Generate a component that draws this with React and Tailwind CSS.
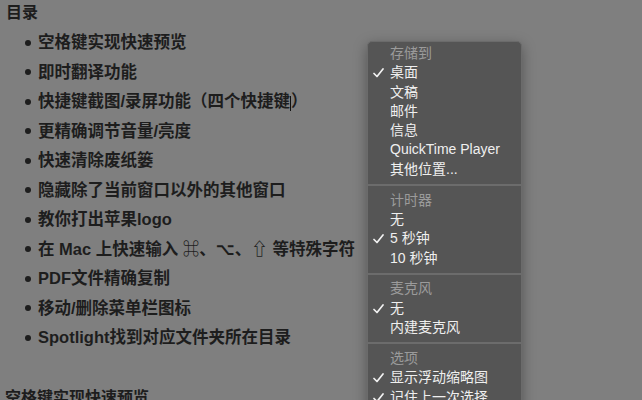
const items = [
  '空格键实现快速预览',
  '即时翻译功能',
  'CURSOR',
  '更精确调节音量/亮度',
  '快速清除废纸篓',
  '隐藏除了当前窗口以外的其他窗口',
  '教你打出苹果logo',
  '在 Mac 上快速输入 ⌘、⌥、⇧ 等特殊字符',
  'PDF文件精确复制',
  '移动/删除菜单栏图标',
  'Spotlight找到对应文件夹所在目录',
]

const menu = [
  { title: '存储到', rows: [['桌面', true], ['文稿'], ['邮件'], ['信息'], ['QuickTime Player'], ['其他位置...']] },
  { title: '计时器', rows: [['无'], ['5 秒钟', true], ['10 秒钟']] },
  { title: '麦克风', rows: [['无', true], ['内建麦克风']] },
  { title: '选项', rows: [['显示浮动缩略图', true], ['记住上一次选择', true]] },
]

function Check() {
  return (
    <svg width="11" height="10" viewBox="0 0 11 10" className="absolute left-[5px] top-[5px]">
      <path d="M1 5.5 L4 8.5 L10 1" fill="none" stroke="#f2f2f2" strokeWidth="1.7" strokeLinecap="round" strokeLinejoin="round" />
    </svg>
  )
}

function CaptureMenu() {
  return (
    <div className="absolute left-[367px] top-[41px] w-[155px] h-[400px] bg-[#555555] rounded-[5px] border border-[#6b6b6b] pt-[2px] shadow-[0_4px_14px_rgba(0,0,0,0.35)] text-[14px] text-[#efefef]">
      {menu.map((sec, i) => (
        <div key={sec.title}>
          {i > 0 && <div className="my-[4.8px] h-[2px] bg-[#6c6c6c]" />}
          <div className="h-[19.3px] leading-[19.3px] pl-[22px] text-[#9b9b9b]">{sec.title}</div>
          {sec.rows.map(([label, checked]) => (
            <div key={label} className="relative h-[19.3px] leading-[19.3px] pl-[22px] whitespace-nowrap">
              {checked && <Check />}
              {label}
            </div>
          ))}
        </div>
      ))}
    </div>
  )
}

export default function App() {
  return (
    <div
      className="relative h-[400px] w-[642px] overflow-hidden bg-[#7f7f7f] text-[#1d1d1d]"
      style={{ fontFamily: '"Liberation Sans", "Noto Sans CJK SC", "DejaVu Sans", sans-serif' }}
    >
      <div className="pl-[6px] h-[28px] leading-[26px] text-[16px] font-bold">目录</div>
      <ul>
        {items.map((t) => (
          <li key={t} className="flex h-[29.5px] items-center pl-[25px] text-[16.5px] font-bold whitespace-nowrap">
            <span className="mr-[7px] h-[6px] w-[6px] shrink-0 rounded-full bg-[#1d1d1d]" />
            {t === 'CURSOR' ? (
              <span>
                快捷键截图/录屏功能（四个快捷键
                <span className="inline-block h-[15px] w-px bg-[#111] align-middle" />
                ）
              </span>
            ) : (
              t
            )}
          </li>
        ))}
      </ul>
      <div className="mt-[32px] pl-[5px] leading-[26px] text-[16px] font-bold">空格键实现快速预览</div>
      <CaptureMenu />
    </div>
  )
}
